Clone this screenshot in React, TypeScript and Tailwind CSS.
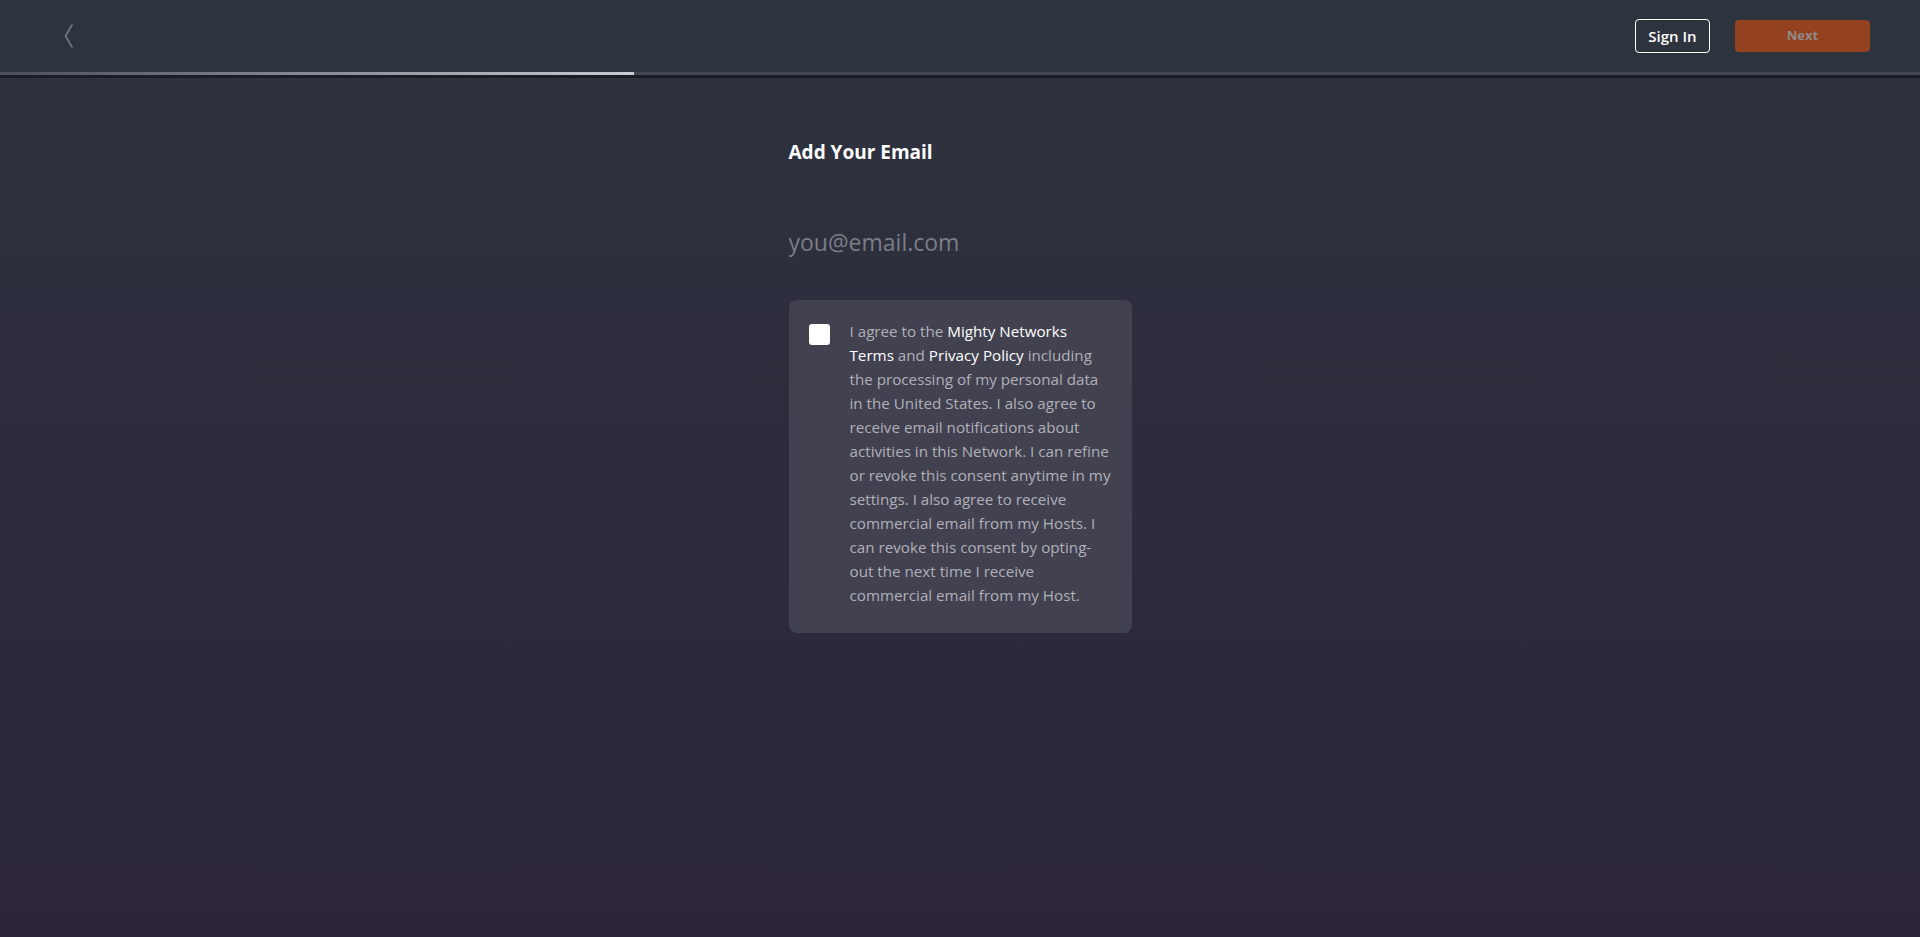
import React from "react";

const W = ({ children }: { children: React.ReactNode }) => <span className="text-white">{children}</span>;

export default function App() {
  return (
    <div
      className="min-h-[937px] w-full flex flex-col bg-gradient-to-b from-[#2e333e] to-[#2c253a]"
      style={{ fontFamily: '"Open Sans", "Noto Sans", sans-serif' }}
    >
      <header className="h-[72px] bg-[#2e343e] flex items-center justify-between pl-[64px] pr-[50px]">
        <button className="w-[12px] h-[24px] flex items-center" aria-label="Back">
          <svg width="9" height="24" viewBox="0 0 9 24" fill="none">
            <path d="M8 1 L1.5 12 L8 23" stroke="#737984" strokeWidth="1.6" strokeLinecap="round" strokeLinejoin="round" />
          </svg>
        </button>
        <div className="flex items-center gap-[25px]">
          <button className="h-[34px] w-[75px] rounded-[4px] border border-white text-white text-[15px] font-semibold flex items-center justify-center">
            Sign In
          </button>
          <button className="h-[32px] w-[135px] rounded-[4px] bg-[#93411f] text-[#8f8a88] text-[13px] font-bold flex items-center justify-center">
            Next
          </button>
        </div>
      </header>
      <div className="h-[3px] bg-[#434852] flex">
        <div className="w-[634px] h-full bg-gradient-to-r from-[#4a505b] to-[#c9ccd4]" />
      </div>
      <div className="h-[3px] bg-[#1b1d26]" />
      <main className="flex justify-center">
        <div className="w-[343px] flex flex-col">
          <h1 className="mt-[62px] text-[19px] leading-[24px] font-bold text-white">Add Your Email</h1>
          <input
            className="mt-[63px] bg-transparent outline-none text-[23px] leading-[30px] text-white placeholder:text-[#7a7e88]"
            placeholder="you@email.com"
          />
          <div className="mt-[43px] h-[333px] rounded-[8px] bg-[#41414f] flex gap-[20px] pl-[20px] pr-[18px] pt-[19px]">
            <div className="mt-[5px] w-[21px] h-[21px] shrink-0 rounded-[3px] bg-white" />
            <p className="text-[15.2px] leading-[24px] text-[#b1b0b9] whitespace-nowrap">
              I agree to the <W>Mighty Networks</W>
              <br />
              <W>Terms</W> and <W>Privacy Policy</W> including
              <br />
              the processing of my personal data
              <br />
              in the United States. I also agree to
              <br />
              receive email notifications about
              <br />
              activities in this Network. I can refine
              <br />
              or revoke this consent anytime in my
              <br />
              settings. I also agree to receive
              <br />
              commercial email from my Hosts. I
              <br />
              can revoke this consent by opting-
              <br />
              out the next time I receive
              <br />
              commercial email from my Host.
            </p>
          </div>
        </div>
      </main>
    </div>
  );
}
